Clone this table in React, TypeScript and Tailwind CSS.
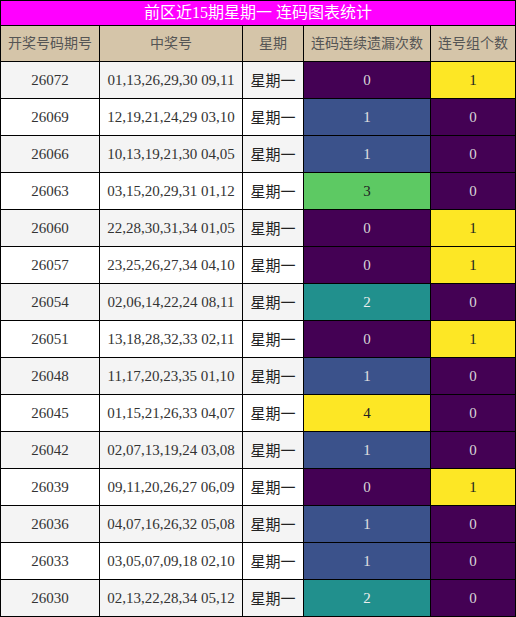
import React from "react";

const rows: [string, string, number, number][] = [
  ["26072", "01,13,26,29,30 09,11", 0, 1],
  ["26069", "12,19,21,24,29 03,10", 1, 0],
  ["26066", "10,13,19,21,30 04,05", 1, 0],
  ["26063", "03,15,20,29,31 01,12", 3, 0],
  ["26060", "22,28,30,31,34 01,05", 0, 1],
  ["26057", "23,25,26,27,34 04,10", 0, 1],
  ["26054", "02,06,14,22,24 08,11", 2, 0],
  ["26051", "13,18,28,32,33 02,11", 0, 1],
  ["26048", "11,17,20,23,35 01,10", 1, 0],
  ["26045", "01,15,21,26,33 04,07", 4, 0],
  ["26042", "02,07,13,19,24 03,08", 1, 0],
  ["26039", "09,11,20,26,27 06,09", 0, 1],
  ["26036", "04,07,16,26,32 05,08", 1, 0],
  ["26033", "03,05,07,09,18 02,10", 1, 0],
  ["26030", "02,13,22,28,34 05,12", 2, 0],
];

const missClass: Record<number, string> = {
  0: "bg-[#440154] text-[#d8d8d8]",
  1: "bg-[#3b528b] text-[#e0e0e0]",
  2: "bg-[#21908d] text-[#eeeeee]",
  3: "bg-[#5dc963] text-[#222222]",
  4: "bg-[#fde725] text-[#222222]",
};
const groupClass: Record<number, string> = {
  0: "bg-[#440154] text-[#d8d8d8]",
  1: "bg-[#fde725] text-[#222222]",
};

export default function App() {
  return (
    <div
      className="w-[516px] bg-black p-px"
      style={{ fontFamily: '"Liberation Serif", "Noto Sans CJK SC", serif' }}
    >
      <div className="h-[24px] bg-[#ff00ff] text-white text-[16px] flex items-center justify-center leading-none">
        前区近15期星期一 连码图表统计
      </div>
      <div className="mt-px grid grid-cols-[98px_142px_60px_126px_84px] grid-rows-[35px_repeat(15,36px)] gap-px">
        {["开奖号码期号", "中奖号", "星期", "连码连续遗漏次数", "连号组个数"].map((h) => (
          <div
            key={h}
            className="bg-[#d5c5a9] text-[#555555] text-[14px] flex items-center justify-center"
          >
            {h}
          </div>
        ))}
        {rows.map(([id, nums, miss, grp], i) => {
          const bg = i % 2 === 0 ? "bg-[#f4f4f4]" : "bg-white";
          return (
            <React.Fragment key={id}>
              <div className={`${bg} text-[#333333] text-[15px] flex items-center justify-center`}>{id}</div>
              <div className={`${bg} text-[#333333] text-[15px] flex items-center justify-center`}>{nums}</div>
              <div className={`${bg} text-[#222222] text-[15px] flex items-center justify-center pt-[3px]`}>星期一</div>
              <div className={`${missClass[miss]} text-[15px] flex items-center justify-center`}>{miss}</div>
              <div className={`${groupClass[grp]} text-[15px] flex items-center justify-center`}>{grp}</div>
            </React.Fragment>
          );
        })}
      </div>
    </div>
  );
}
